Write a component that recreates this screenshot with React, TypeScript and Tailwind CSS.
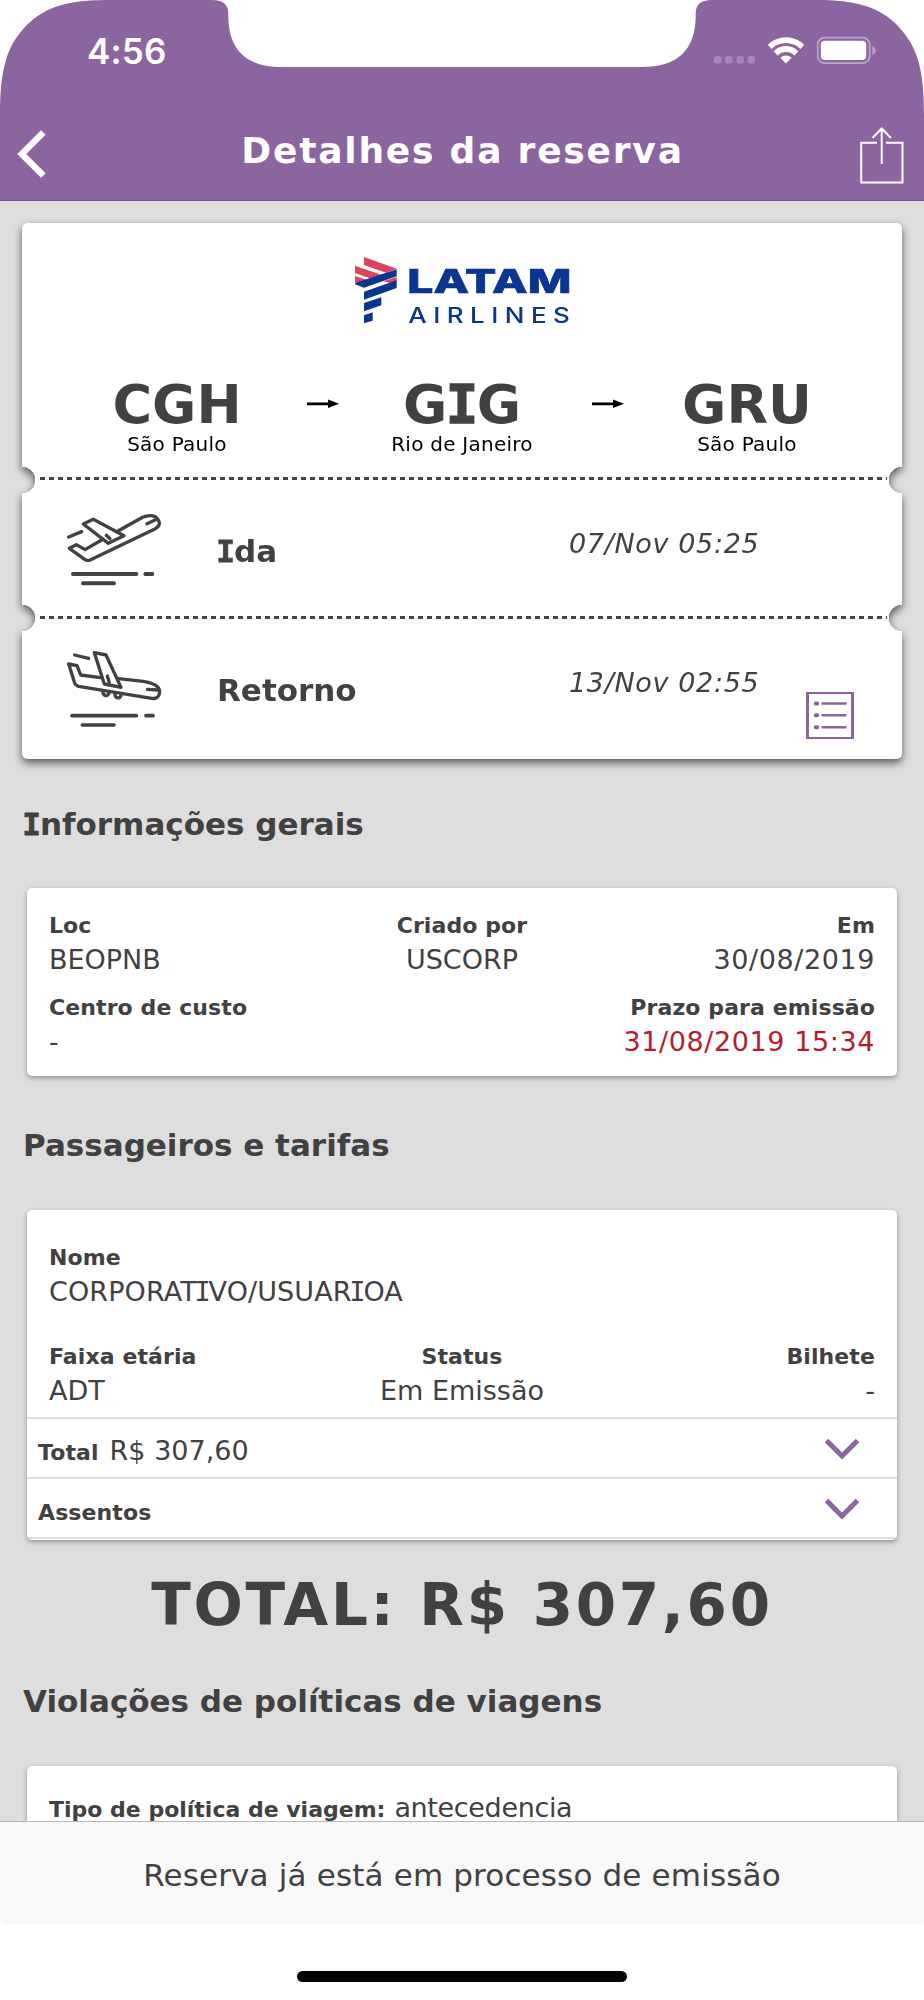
import type { ReactNode } from "react";

type Align = "left" | "center" | "right";

const alignClass: Record<Align, string> = {
  left: "text-left",
  center: "text-center",
  right: "text-right",
};

const airports = [
  { code: "CGH", city: "São Paulo" },
  { code: "GIG", city: "Rio de Janeiro" },
  { code: "GRU", city: "São Paulo" },
];

// The sans face has a bare capital I, so borrow the one with bars from the mono face
function barredI(text: string, bold = false) {
  return text.split(/(I)/).map((part, i) =>
    part === "I" ? (
      <span
        key={i}
        className={
          bold
            ? "font-['DejaVu_Sans_Mono',monospace] -mx-[0.028em] [-webkit-text-stroke:0.025em_currentColor]"
            : "font-['DejaVu_Sans_Mono',monospace] -mx-[0.085em]"
        }
      >
        I
      </span>
    ) : (
      part
    )
  );
}

function StatusBar() {
  return (
    <div className="h-[104px] flex items-start">
      <span className="ml-[87px] mt-[30px] font-['Inter',sans-serif] font-semibold text-[35px] leading-[42px] tracking-[0.2px]">
        4:56
      </span>
      <svg className="ml-auto mr-[48px] mt-[34px]" width="166" height="32" viewBox="710 34 166 32">
        <g fill="#a587b7">
          <rect x="714" y="56" width="7.6" height="7.6" rx="2.4" />
          <rect x="725.2" y="56" width="7.6" height="7.6" rx="2.4" />
          <rect x="736.4" y="56" width="7.6" height="7.6" rx="2.4" />
          <rect x="747.6" y="56" width="7.6" height="7.6" rx="2.4" />
        </g>
        <g fill="#fff">
          <path d="M767.8 44.8a26 26 0 0 1 36.4 0l-3.7 4.100a21 21 0 0 0-29 0z" />
          <path d="M773.700 51.200a17.200 17.200 0 0 1 24.600 0l-3.900 4.200a12 12 0 0 0-16.800 0z" />
          <path d="M780.300 57.700a8.300 8.300 0 0 1 11.400 0L786 63.400z" />
        </g>
        <rect x="817.7" y="37.7" width="52" height="25.4" rx="7" fill="none" stroke="#b9a2c7" strokeWidth="1.8" />
        <rect x="820.8" y="40.8" width="45.4" height="19.2" rx="4" fill="#fff" />
        <path d="M872.3 46c2.2 1 3.4 2.6 3.4 4.5s-1.2 3.5-3.4 4.5z" fill="#b9a2c7" />
      </svg>
    </div>
  );
}

function Header() {
  return (
    <header className="relative h-[201px] shrink-0 bg-[#8b65a0] border-b border-[#76508c] text-white">
      <svg className="absolute left-0 top-0" width="924" height="120" viewBox="0 0 924 120" fill="#fff">
        <path d="M0 0H110C80 0 62 3 46 11C25 22 11 42 6 60C2 74 0 88 0 116Z" />
        <path d="M924 0H814C844 0 862 3 878 11C899 22 913 42 918 60C922 74 924 88 924 116Z" />
        <path d="M212 0C224 0 228 5 228.3 13C228 33 232 67 281 67H643C692 67 696 33 695.7 13C696 5 700 0 712 0Z" />
      </svg>
      <StatusBar />
      <div className="flex items-start h-[96px]">
        <svg className="ml-[16px] mt-[25px]" width="32" height="50" viewBox="16 129 32 50">
          <path d="M43.3 132.5L21.8 154L43.3 175.5" fill="none" stroke="#fff" strokeWidth="6.5" />
        </svg>
        <h1 className="flex-1 text-center mt-[29px] pl-[19px] text-[36px] leading-[36px] font-bold tracking-[1.8px]">
          Detalhes da reserva
        </h1>
        <svg className="mr-[20px] mt-[21px]" width="46" height="62" viewBox="858 125 46 62" fill="none" stroke="#fff" strokeWidth="2">
          <path d="M877 142.8H861.2V182.5H902.5V142.8H886" />
          <path d="M881.7 164V129" />
          <path d="M872.5 138L881.7 128.5L891 138" />
        </svg>
      </div>
    </header>
  );
}

function AirlineLogo() {
  return (
    <svg className="mr-[4px]" width="280" height="110" viewBox="0 0 840 330">
      <g fill="#e0415f">
        <path d="M132 51L230 86L198 98L132 75Z" />
        <path d="M105 77L188 106L156 117L105 99Z" />
        <path d="M105 108L144 121L117 130L105 126Z" />
        <path d="M190 124L230 111V127L218 131Z" />
      </g>
      <g fill="#0a3690">
        <path d="M105 129L230 88V109L132 143L105 133Z" />
        <path d="M132 155L230 121V144L132 179Z" />
        <path d="M132 189L184 172V196L132 214Z" />
        <path d="M132 226L158 217V242L132 250Z" />
      </g>
      <text
        x="262"
        y="158"
        fill="#0a3690"
        stroke="#0a3690"
        strokeWidth="2"
        textLength="492"
        lengthAdjust="spacingAndGlyphs"
        className="font-['Inter',sans-serif] font-extrabold text-[98px]"
      >
        LATAM
      </text>
      <text
        x="265"
        y="249"
        fill="#0a3690"
        textLength="504"
        lengthAdjust="spacingAndGlyphs"
        className="font-['Inter',sans-serif] font-medium text-[64px] tracking-[16px]"
      >
        AIRLINES
      </text>
    </svg>
  );
}

function TakeoffIcon() {
  return (
    <svg
      width="100"
      height="80"
      viewBox="195 450 300 240"
      fill="none"
      stroke="#414141"
      strokeWidth="10"
      strokeLinecap="round"
      strokeLinejoin="round"
    >
      <path d="M305 540L255 569L229 554L208 565L254 598Q262 604 272 599L466 506C480 498 481 488 474 478C465 465 446 464 428 472L350 515" />
      <path d="M250 492L280 478L372 527L325 550Z" />
      <path d="M319 526L330 536" />
      <path d="M441 491L470 478" />
      <path d="M206 531L245 515" />
      <path d="M219 642H409M436 642H457M249 670H342" strokeWidth="12" />
    </svg>
  );
}

function LandingIcon() {
  return (
    <svg
      width="100"
      height="80"
      viewBox="195 175 300 240"
      fill="none"
      stroke="#414141"
      strokeWidth="10"
      strokeLinecap="round"
      strokeLinejoin="round"
    >
      <path d="M302 261L242 253L231 225L206 220L224 277Q227 285 236 287L455 323C472 326 479 315 479 302C478 286 455 276 430 272L355 264" />
      <path d="M283 186L318 193L363 290L313 280Z" />
      <path d="M322 256L328 276" />
      <path d="M442 296L475 298" />
      <path d="M309 304A9 9 0 1 0 327 307M345 311A9 9 0 1 0 363 314" />
      <path d="M224 193L266 203" />
      <path d="M216 375H409M438 375H459M247 403H342" strokeWidth="11" />
    </svg>
  );
}

function ListIcon() {
  return (
    <svg width="48" height="47" viewBox="0 0 48 47" fill="none" stroke="#8b65a0">
      <path d="M1.5 0V47M46.500 0V47" strokeWidth="3" />
      <path d="M0 1H48M0 46H48" strokeWidth="2" />
      <path d="M16.500 11.500H39.500M16.500 23.300H39.500M16.500 35.200H39.500" strokeWidth="2.500" strokeLinecap="round" />
      <path d="M9.700 11.500H11.300M9.700 23.300H11.300M9.700 35.200H11.300" strokeWidth="4" strokeLinecap="round" />
    </svg>
  );
}

function RouteArrow() {
  return (
    <svg className="mt-[21px] shrink-0" width="32" height="10" viewBox="0 0 32 10">
      <path d="M0 3.600H21V0.600L32 4.800L21 9V6.200H0Z" fill="#000" />
    </svg>
  );
}

function Perforation() {
  return (
    <div className="h-[3px] ml-[18px] w-[847px] shrink-0 bg-[repeating-linear-gradient(90deg,#444_0,#444_5px,transparent_5px,transparent_9px)]" />
  );
}

function Leg({ icon, label, date, action }: { icon: ReactNode; label: string; date: string; action?: ReactNode }) {
  return (
    <div className="flex items-start pl-[43px] text-[#414141]">
      <div className="w-[152px] pt-[30px]">{icon}</div>
      <h3 className="w-[352px] pt-[55px] text-[31px] leading-[32px] font-bold">{barredI(label, true)}</h3>
      <p className="w-[237px] pt-[50px] text-[27px] leading-[28px] italic tracking-[0.65px]">{date}</p>
      {action && <div className="pt-[73px]">{action}</div>}
    </div>
  );
}

function Ticket() {
  return (
    <div className="mt-[22px] mx-[22px] drop-shadow-[0_4px_4px_rgba(0,0,0,0.6)]">
      <div className="h-[536px] rounded-[5px] bg-white [mask-image:radial-gradient(circle_13.5px_at_0_257px,transparent_96%,black),radial-gradient(circle_13.5px_at_100%_257px,transparent_96%,black),radial-gradient(circle_13.5px_at_0_395px,transparent_96%,black),radial-gradient(circle_13.5px_at_100%_395px,transparent_96%,black)] [mask-composite:intersect]">
        <div className="h-[254px] pt-[17px]">
          <div className="flex justify-center">
            <AirlineLogo />
          </div>
          <div className="mt-[28px] flex justify-center">
            {airports.map((airport, i) => (
              <div key={i} className="flex items-start">
                {i > 0 && (
                  <div className="w-[6px] -mr-[6px] flex justify-center">
                    <RouteArrow />
                  </div>
                )}
                <div className="w-[285px] text-center">
                  <h2 className="text-[54px] leading-[54px] font-bold text-[#414141]">{barredI(airport.code, true)}</h2>
                  <p className="mt-[2px] text-[20px] leading-[20px] tracking-[0.25px] text-black">{airport.city}</p>
                </div>
              </div>
            ))}
          </div>
        </div>
        <Perforation />
        <div className="h-[136px]">
          <Leg icon={<TakeoffIcon />} label="Ida" date="07/Nov 05:25" />
        </div>
        <Perforation />
        <Leg icon={<LandingIcon />} label="Retorno" date="13/Nov 02:55" action={<ListIcon />} />
      </div>
    </div>
  );
}

function SectionTitle({ children }: { children: string }) {
  return <h2 className="ml-[23px] text-[31px] leading-[36px] font-bold">{barredI(children, true)}</h2>;
}

function Card({ className, children }: { className: string; children: ReactNode }) {
  return (
    <div className={`mx-[27px] rounded-[5px] bg-white shadow-[0_2px_5px_rgba(0,0,0,0.35)] ${className}`}>
      {children}
    </div>
  );
}

function Field({
  label,
  value,
  align = "left",
  valueClass = "",
}: {
  label: string;
  value: string;
  align?: Align;
  valueClass?: string;
}) {
  return (
    <div className={alignClass[align]}>
      <p className="text-[22px] leading-[24px] font-bold tracking-[0.1px]">{label}</p>
      <p className={`mt-[4px] text-[27px] leading-[36px] ${valueClass}`}>{barredI(value)}</p>
    </div>
  );
}

function Chevron() {
  return (
    <svg className="ml-auto mr-[37px] mt-[19px]" width="36" height="24" viewBox="0 0 36 24">
      <path d="M2.500 2.500L18 18L33.500 2.500" fill="none" stroke="#8b65a0" strokeWidth="5" />
    </svg>
  );
}

function ExpandRow({ label, value }: { label: string; value?: string }) {
  return (
    <div className="h-[60px] flex items-start border-t-2 border-[#dcdcdc] pl-[11px]">
      <p className="pt-[14px] text-[27px] leading-[36px]">
        <span className="text-[22px] font-bold tracking-[0.1px]">{label}</span>
        {value && <span className="ml-[11px]">{value}</span>}
      </p>
      <Chevron />
    </div>
  );
}

export default function App() {
  return (
    <div className="w-[924px] h-[2000px] flex flex-col overflow-hidden bg-white font-['DejaVu_Sans',Verdana,sans-serif] text-[#414141]">
      <Header />

      <main className="h-[1620px] shrink-0 flex flex-col overflow-hidden bg-[#dedede] [&>*]:shrink-0">
        <Ticket />

        <div className="mt-[47px]">
          <SectionTitle>Informações gerais</SectionTitle>
        </div>
        <Card className="mt-[46px] h-[188px] px-[22px] pt-[26px]">
          <div className="grid grid-cols-3">
            <Field label="Loc" value="BEOPNB" />
            <Field label="Criado por" value="USCORP" align="center" />
            <Field label="Em" value="30/08/2019" align="right" valueClass="tracking-[0.6px]" />
          </div>
          <div className="mt-[18px] flex justify-between">
            <Field label="Centro de custo" value="-" />
            <Field
              label="Prazo para emissão"
              value="31/08/2019 15:34"
              align="right"
              valueClass="text-[#b71c2c] tracking-[0.6px]"
            />
          </div>
        </Card>

        <div className="mt-[51px]">
          <SectionTitle>Passageiros e tarifas</SectionTitle>
        </div>
        <Card className="mt-[47px] h-[330px] overflow-hidden">
          <div className="h-[207px] px-[22px] pt-[36px]">
            <Field label="Nome" value="CORPORATIVO/USUARIOA" valueClass="tracking-[0.1px]" />
            <div className="mt-[35px] grid grid-cols-3">
              <Field label="Faixa etária" value="ADT" />
              <Field label="Status" value="Em Emissão" align="center" />
              <Field label="Bilhete" value="-" align="right" />
            </div>
          </div>
          <ExpandRow label="Total" value="R$ 307,60" />
          <ExpandRow label="Assentos" />
          <div className="h-[3px] border-t-2 border-[#dcdcdc]" />
        </Card>

        <p className="mt-[35px] text-center text-[58px] leading-[60px] font-bold tracking-[2.7px]">TOTAL: R$ 307,60</p>

        <div className="mt-[48px]">
          <SectionTitle>Violações de políticas de viagens</SectionTitle>
        </div>
        <Card className="mt-[47px] h-[120px] px-[22px] pt-[24px]">
          <p className="leading-[36px]">
            <span className="text-[22px] font-bold">Tipo de política de viagem:</span>
            <span className="ml-[9px] text-[27px] tracking-[-0.35px]">antecedencia</span>
          </p>
        </Card>
      </main>

      <footer className="h-[103px] shrink-0 border-t border-[#b8b8b8] bg-[#f8f8f8] rounded-b-[6px] pt-[35px] text-center text-[31px] leading-[36px] tracking-[0.15px]">
        Reserva já está em processo de emissão
      </footer>
      <div className="mt-[47px] mx-auto w-[330px] h-[11px] rounded-full bg-black" />
    </div>
  );
}
